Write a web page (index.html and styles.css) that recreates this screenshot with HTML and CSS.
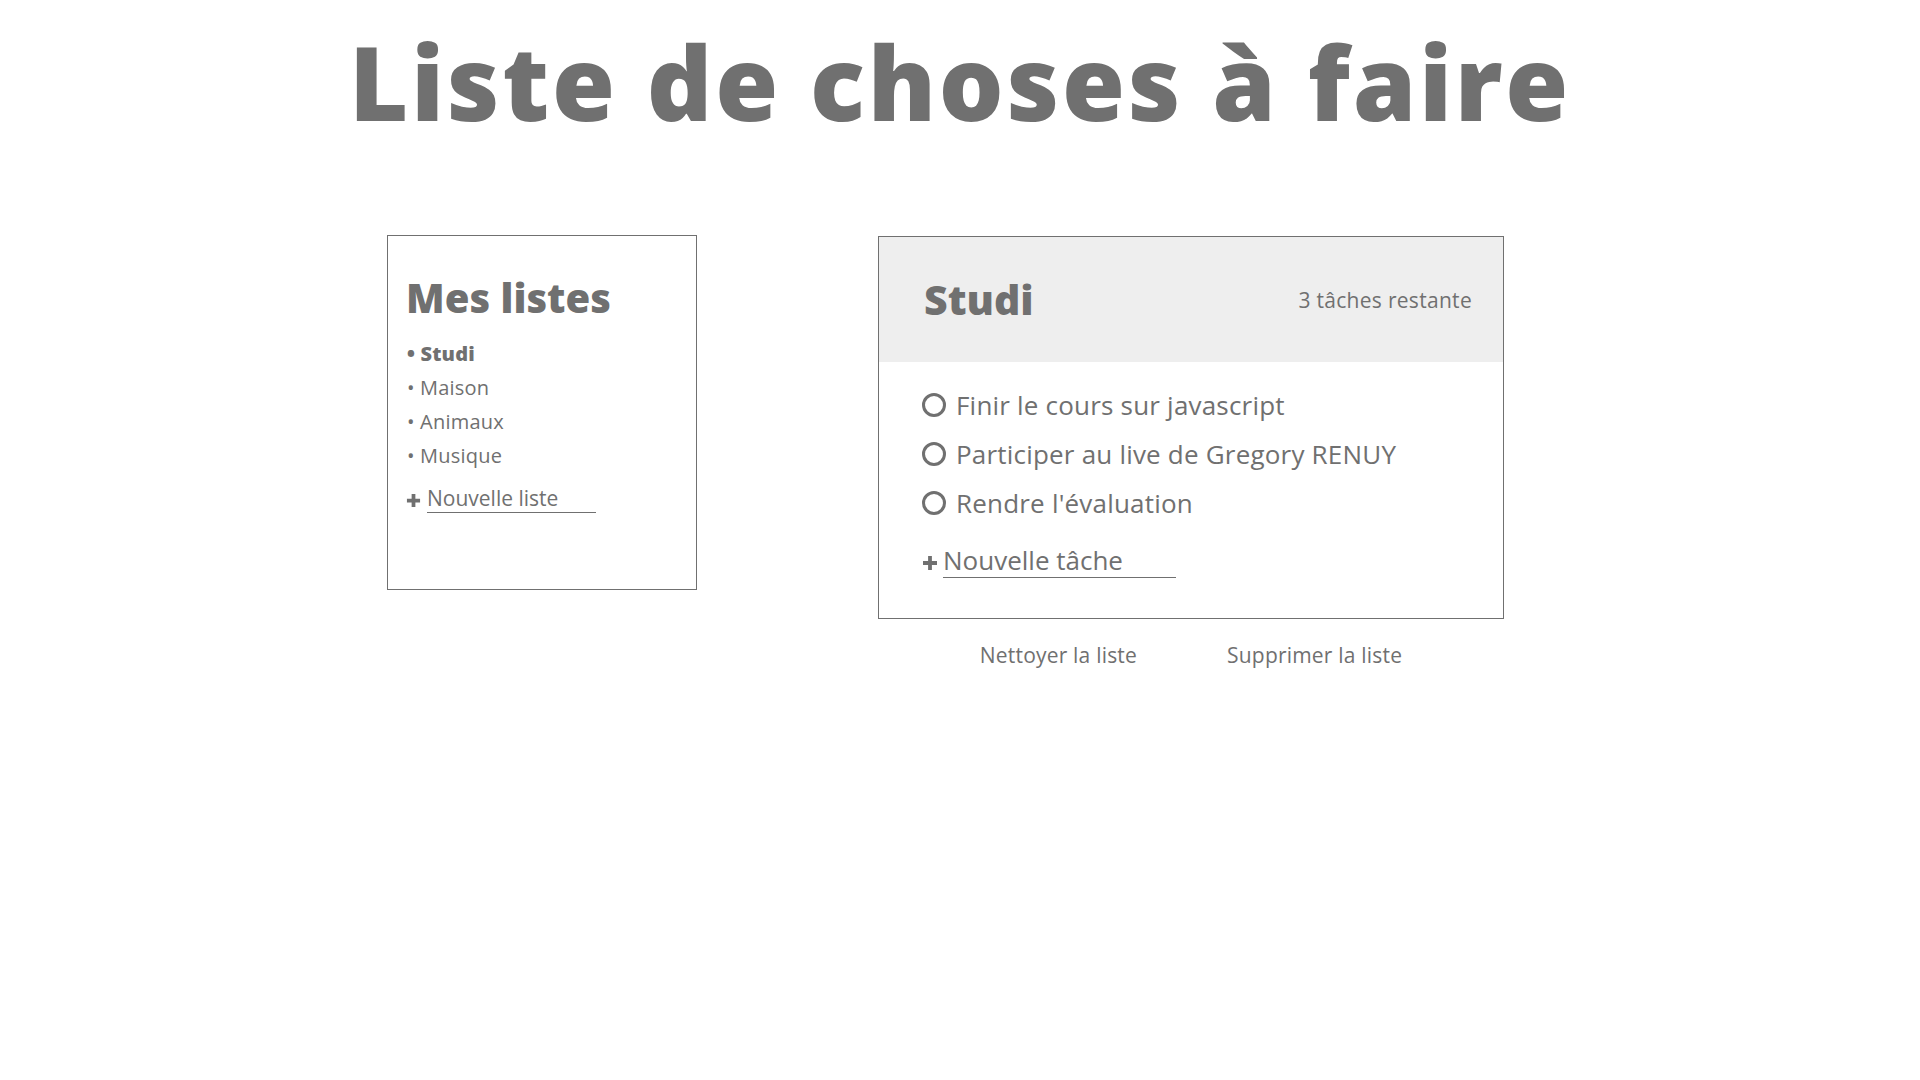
FILE: index.html
```html
<!DOCTYPE html>
<html lang="fr">
<head>
<meta charset="utf-8">
<title>Liste de choses à faire</title>
<link rel="stylesheet" href="styles.css">
</head>
<body>
<h1 class="title">Liste de choses à faire</h1>
<main class="layout">
  <aside class="lists">
    <h2 class="lists-title">Mes listes</h2>
    <ul class="lists-items">
      <li class="lists-item active">• Studi</li>
      <li class="lists-item">• Maison</li>
      <li class="lists-item">• Animaux</li>
      <li class="lists-item">• Musique</li>
    </ul>
    <form class="new-list">
      <svg class="plus plus-small" viewBox="0 0 16 16"><path d="M8 1v14M1 8h14" stroke="#707070" stroke-width="4"/></svg>
      <input class="new-list-input" type="text" placeholder="Nouvelle liste">
    </form>
  </aside>
  <section class="tasks-col">
    <div class="tasks">
      <div class="tasks-header">
        <h2 class="tasks-title">Studi</h2>
        <p class="tasks-count">3 tâches restante</p>
      </div>
      <div class="tasks-body">
        <div class="task"><span class="check"></span><span>Finir le cours sur javascript</span></div>
        <div class="task"><span class="check"></span><span>Participer au live de Gregory RENUY</span></div>
        <div class="task"><span class="check"></span><span>Rendre l'évaluation</span></div>
        <form class="new-task">
          <svg class="plus plus-big" viewBox="0 0 16 16"><path d="M8 1v14M1 8h14" stroke="#707070" stroke-width="3.8"/></svg>
          <input class="new-task-input" type="text" placeholder="Nouvelle tâche">
        </form>
      </div>
    </div>
    <div class="actions">
      <button class="btn" type="button">Nettoyer la liste</button>
      <button class="btn" type="button">Supprimer la liste</button>
    </div>
  </section>
</main>
</body>
</html>
```
FILE: styles.css
```css
* { box-sizing: border-box; }
body {
  margin: 0;
  font-family: "Open Sans", "Liberation Sans", sans-serif;
  color: #707070;
  background: #fff;
}
.title {
  margin: 31px 0 0;
  text-align: center;
  font-size: 102px;
  font-weight: 800;
  line-height: 1;
  letter-spacing: 2.7px;
}
.layout {
  display: flex;
  align-items: flex-start;
  gap: 181px;
  padding-left: 387px;
  margin-top: 102px;
}
.lists {
  width: 310px;
  height: 355px;
  border: 1px solid #707070;
  padding: 38px 18px 0;
}
.lists-title {
  margin: 0;
  font-size: 40px;
  font-weight: 800;
  line-height: 1.2;
}
.lists-items {
  list-style: none;
  margin: 15px 0 0;
  padding: 0 0 0 1px;
}
.lists-item {
  font-size: 20px;
  line-height: 34px;
  letter-spacing: 0.2px;
}
.lists-item.active { font-weight: 800; }
.new-list {
  display: flex;
  align-items: center;
  gap: 6px;
  margin-top: 12px;
}
.plus-small { width: 15px; height: 15px; margin-top: 2px; }
.new-list-input {
  width: 169px;
  border: none;
  border-bottom: 1px solid #707070;
  padding: 0;
  font-family: inherit;
  font-size: 21px;
  line-height: 27px;
  color: #707070;
  outline: none;
  background: transparent;
}
.new-list-input::placeholder, .new-task-input::placeholder { color: #707070; opacity: 1; }
.tasks-col { display: flex; flex-direction: column; margin-top: 1px; }
.tasks {
  width: 626px;
  height: 383px;
  border: 1px solid #707070;
}
.tasks-header {
  height: 125px;
  background: #eeeeee;
  display: flex;
  align-items: center;
  justify-content: space-between;
  padding: 0 31px 0 45px;
}
.tasks-title {
  margin: 0;
  font-size: 41px;
  font-weight: 800;
  line-height: 1;
}
.tasks-count {
  margin: 0;
  font-size: 21px;
  letter-spacing: 0.3px;
}
.tasks-body { padding: 18px 0 0 43px; }
.task {
  display: flex;
  align-items: center;
  gap: 10px;
  height: 49px;
  font-size: 26px;
  letter-spacing: 0.2px;
}
.check {
  width: 24px;
  height: 24px;
  border: 3px solid #707070;
  border-radius: 50%;
  flex: none;
}
.new-task {
  display: flex;
  align-items: center;
  gap: 5px;
  margin-top: 17px;
}
.plus-big { width: 16px; height: 16px; margin-top: 4px; }
.new-task-input {
  width: 233px;
  border: none;
  border-bottom: 1px solid #707070;
  padding: 0;
  font-family: inherit;
  font-size: 26px;
  line-height: 33px;
  color: #707070;
  outline: none;
  background: transparent;
}
.actions {
  display: flex;
  justify-content: center;
  gap: 90px;
  margin-top: 22px;
}
.btn {
  border: none;
  background: none;
  padding: 0;
  font-family: inherit;
  font-size: 21px;
  letter-spacing: 0.2px;
  color: #707070;
  cursor: pointer;
}
```
